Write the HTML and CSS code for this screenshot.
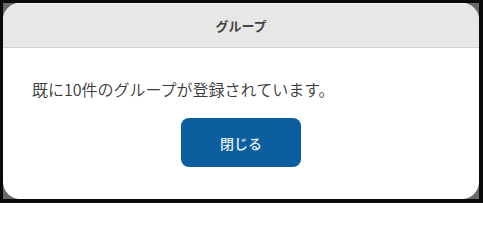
FILE: index.html
```html
<!DOCTYPE html>
<html lang="ja">
<head>
<meta charset="utf-8">
<link rel="stylesheet" href="styles.css">
</head>
<body>
<div class="frame">
  <div class="dialog">
    <div class="header">グループ</div>
    <div class="body">
      <p class="message">既に10件のグループが登録されています。</p>
      <div class="actions">
        <button class="btn">閉じる</button>
      </div>
    </div>
  </div>
</div>
</body>
</html>
```

FILE: styles.css
```css
html, body {
  margin: 0;
  padding: 0;
  background: #fff;
}
body {
  width: 483px;
  font-family: "Noto Sans CJK JP", "Noto Sans", sans-serif;
}
.frame {
  width: 483px;
  height: 203px;
  box-sizing: border-box;
  border-style: solid;
  border-color: #0a0a0a;
  border-width: 3px 4px 4px 3px;
  background: #6a6a6a;
}
.dialog {
  height: 100%;
  background: #fff;
  border-radius: 17px;
  overflow: hidden;
  display: flex;
  flex-direction: column;
}
.header {
  height: 45px;
  box-sizing: border-box;
  background: #e7e7e7;
  border-top: 1px solid #f7f7f7;
  border-bottom: 1px solid #d2d2d2;
  display: flex;
  align-items: center;
  justify-content: center;
  font-size: 13px;
  font-weight: bold;
  color: #444;
}
.body {
  padding: 30px 0 0 29px;
}
.message {
  margin: 0;
  font-size: 16px;
  line-height: 22px;
  color: #3a3a3a;
  font-weight: 350;
}
.actions {
  display: flex;
  justify-content: center;
  margin-top: 18px;
  padding-right: 29px;
}
.btn {
  width: 120px;
  height: 49px;
  border: none;
  border-radius: 8px;
  background: #0b5f9e;
  color: #e8f0f8;
  font-family: inherit;
  font-size: 14px;
  font-weight: 500;
  padding: 0;
}
```
